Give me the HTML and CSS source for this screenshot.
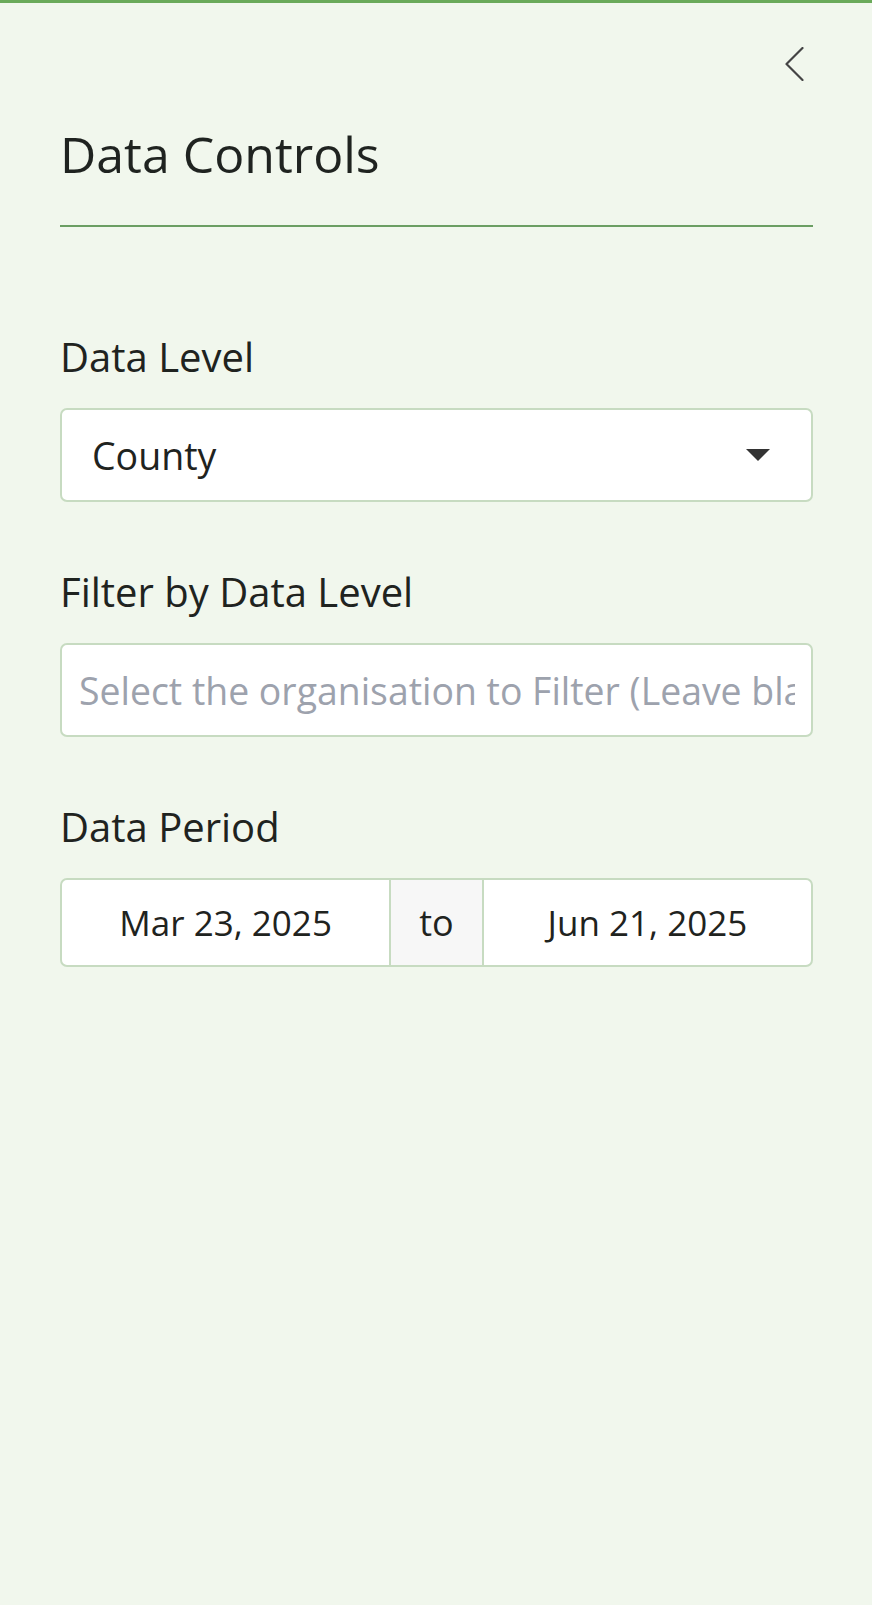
FILE: index.html
```html
<!DOCTYPE html>
<html lang="en">
<head>
<meta charset="utf-8">
<title>Data Controls</title>
<link rel="stylesheet" href="styles.css">
</head>
<body>
<aside class="panel">
  <div class="top">
    <button class="collapse" aria-label="Collapse">
      <svg width="19" height="34" viewBox="0 0 19 34"><polyline points="17.5,1 1.5,17 17.5,33" fill="none" stroke="#444" stroke-width="2.2" stroke-linecap="round" stroke-linejoin="round"/></svg>
    </button>
  </div>
  <h1 class="title">Data Controls</h1>

  <div class="field first">
    <div class="label">Data Level</div>
    <div class="select">
      <span class="value">County</span>
      <svg class="caret" width="24" height="12" viewBox="0 0 24 12"><polygon points="0,0 24,0 12,12" fill="#333"/></svg>
    </div>
  </div>

  <div class="field">
    <div class="label">Filter by Data Level</div>
    <div class="input"><span class="placeholder">Select the organisation to Filter (Leave blank to include all)</span></div>
  </div>

  <div class="field">
    <div class="label">Data Period</div>
    <div class="daterange">
      <div class="date">Mar 23, 2025</div>
      <div class="sep">to</div>
      <div class="date">Jun 21, 2025</div>
    </div>
  </div>
</aside>
</body>
</html>
```

FILE: styles.css
```css
html, body {
  margin: 0;
  padding: 0;
  background: #f1f7ed;
}
body {
  font-family: "Open Sans", "Noto Sans", sans-serif;
  color: #1f2320;
  min-height: 1605px;
}
.panel {
  border-top: 3px solid #6aaa5a;
  padding: 44px 59px 0 60px;
  box-sizing: border-box;
  min-height: 1605px;
}
.top {
  display: flex;
  justify-content: flex-end;
}
.collapse {
  background: none;
  border: 0;
  padding: 0;
  margin: 0 9px 0 0;
  height: 34px;
  display: flex;
}
.title {
  margin: 44px 0 0 0;
  font-size: 50px;
  line-height: 58px;
  font-weight: 400;
  padding-bottom: 42px;
  border-bottom: 2px solid #6b9e63;
  color: #1f2320;
}
.field {
  margin-top: 66px;
}
.field.first {
  margin-top: 106px;
}
.label {
  font-size: 40px;
  line-height: 47px;
  margin-bottom: 28px;
}
.select,
.input,
.daterange {
  box-sizing: border-box;
  background: #fff;
  border: 2px solid #c7dbc1;
  border-radius: 7px;
}
.select {
  height: 94px;
  display: flex;
  align-items: center;
  justify-content: space-between;
  padding: 0 41px 0 30px;
  font-size: 37.5px;
}
.caret {
  display: block;
}
.input {
  height: 94px;
  display: flex;
  align-items: center;
  padding: 0 16px 0 17px;
  font-size: 37.4px;
}
.placeholder {
  display: block;
  flex: 1;
  min-width: 0;
  overflow: hidden;
  white-space: nowrap;
  color: #9da2ad;
}
.daterange {
  height: 89px;
  display: flex;
  overflow: hidden;
  font-size: 35px;
}
.date {
  flex: 1;
  display: flex;
  align-items: center;
  justify-content: center;
}
.sep {
  display: flex;
  align-items: center;
  padding: 0 28px;
  background: #f7f7f7;
  border-left: 2px solid #c7dbc1;
  border-right: 2px solid #c7dbc1;
  font-size: 36px;
}
```
